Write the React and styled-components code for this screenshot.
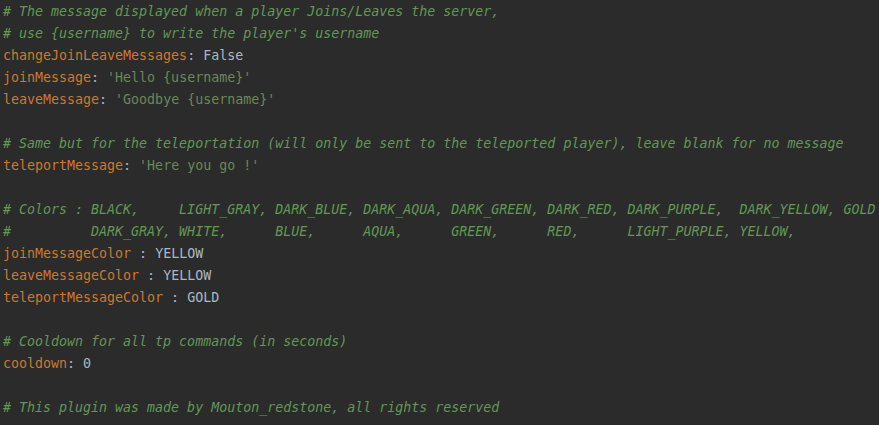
import React from "react";
import styled, { createGlobalStyle } from "styled-components";

const Global = createGlobalStyle`
  html, body { margin: 0; padding: 0; background: #2b2b2b; }
  #root { min-height: 100vh; background: #2b2b2b; }
`;

const Editor = styled.pre`
  margin: 0;
  padding: 1px 0 0 3px;
  width: 879px;
  height: 425px;
  box-sizing: border-box;
  overflow: hidden;
  background: #2b2b2b;
  font-family: "DejaVu Sans Mono", "Liberation Mono", monospace;
  font-size: 13.3px;
  line-height: 22px;
  color: #a9b7c6;
`;

const Line = styled.div`
  height: 22px;
  white-space: pre;
`;

const Comment = styled.span`
  color: #629755;
  font-style: italic;
`;

const Key = styled.span`
  color: #cc7832;
`;

const Punct = styled.span`
  color: #a9b7c6;
`;

const Value = styled.span`
  color: #a9b7c6;
`;

const Str = styled.span`
  color: #6a8759;
`;

const lines = [
  { c: "# The message displayed when a player Joins/Leaves the server," },
  { c: "# use {username} to write the player's username" },
  { k: "changeJoinLeaveMessages", sep: ": ", v: "False" },
  { k: "joinMessage", sep: ": ", s: "'Hello {username}'" },
  { k: "leaveMessage", sep: ": ", s: "'Goodbye {username}'" },
  {},
  { c: "# Same but for the teleportation (will only be sent to the teleported player), leave blank for no message" },
  { k: "teleportMessage", sep: ": ", s: "'Here you go !'" },
  {},
  { c: "# Colors : BLACK,     LIGHT_GRAY, DARK_BLUE, DARK_AQUA, DARK_GREEN, DARK_RED, DARK_PURPLE,  DARK_YELLOW, GOLD" },
  { c: "#          DARK_GRAY, WHITE,      BLUE,      AQUA,      GREEN,      RED,      LIGHT_PURPLE, YELLOW," },
  { k: "joinMessageColor", sep: " : ", v: "YELLOW" },
  { k: "leaveMessageColor", sep: " : ", v: "YELLOW" },
  { k: "teleportMessageColor", sep: " : ", v: "GOLD" },
  {},
  { c: "# Cooldown for all tp commands (in seconds)" },
  { k: "cooldown", sep: ": ", v: "0" },
  {},
  { c: "# This plugin was made by Mouton_redstone, all rights reserved" },
];

export default function App() {
  return (
    <>
      <Global />
      <Editor>
        {lines.map((l, i) => (
          <Line key={i}>
            {l.c && <Comment>{l.c}</Comment>}
            {l.k && <Key>{l.k}</Key>}
            {l.sep && <Punct>{l.sep}</Punct>}
            {l.v && <Value>{l.v}</Value>}
            {l.s && <Str>{l.s}</Str>}
            {!l.c && !l.k && " "}
          </Line>
        ))}
      </Editor>
    </>
  );
}
